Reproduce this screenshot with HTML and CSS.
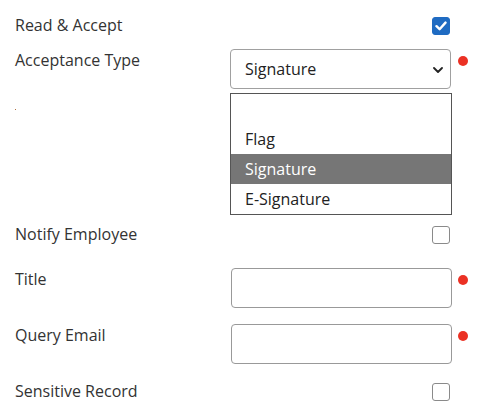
FILE: index.html
```html
<!DOCTYPE html>
<html lang="en">
<head>
  <meta charset="UTF-8">
  <title>Document Settings</title>
  <link rel="stylesheet" href="styles.css">
</head>
<body>
<form class="form">

  <div class="row row-first">
    <label class="label">Read &amp; Accept</label>
    <div class="control control-check">
      <span class="check is-checked">
        <svg width="12" height="10" viewBox="0 0 12 10"><path d="M1.5 5.2 L4.6 8.2 L10.5 1.6" fill="none" stroke="#fff" stroke-width="2.4" stroke-linecap="round" stroke-linejoin="round"/></svg>
      </span>
    </div>
  </div>

  <div class="row row-select">
    <div class="label-col">
      <label class="label">Acceptance Type</label>
      <span class="stray"></span>
    </div>
    <div class="control">
      <div class="select">
        <span>Signature</span>
        <svg class="chevron" width="10" height="6" viewBox="0 0 10 6"><path d="M1 1 L5 5 L9 1" fill="none" stroke="#222" stroke-width="1.8" stroke-linecap="round" stroke-linejoin="round"/></svg>
      </div>
      <ul class="listbox">
        <li class="option"></li>
        <li class="option">Flag</li>
        <li class="option selected">Signature</li>
        <li class="option">E-Signature</li>
      </ul>
    </div>
    <span class="required"></span>
  </div>

  <div class="row row-notify">
    <label class="label">Notify Employee</label>
    <div class="control control-check">
      <span class="check"></span>
    </div>
  </div>

  <div class="row">
    <label class="label">Title</label>
    <div class="control">
      <input class="text-input" type="text">
    </div>
    <span class="required"></span>
  </div>

  <div class="row">
    <label class="label">Query Email</label>
    <div class="control">
      <input class="text-input" type="text">
    </div>
    <span class="required"></span>
  </div>

  <div class="row">
    <label class="label">Sensitive Record</label>
    <div class="control control-check">
      <span class="check"></span>
    </div>
  </div>

</form>
</body>
</html>
```

FILE: styles.css
```css
/* base */
html, body {
  margin: 0;
  padding: 0;
  background: #fff;
  font-family: "Open Sans", "Liberation Sans", sans-serif;
  font-size: 16px;
  color: #333;
}

.form {
  padding: 11px 0 0 15px;
}

/* label + control rows */
.row {
  display: flex;
  align-items: flex-start;
  margin-bottom: 13px;
}
.row-first { margin-bottom: 9px; }
.row-select { margin-bottom: 5px; }
.row-notify { margin-bottom: 19px; }

.label-col {
  display: flex;
  flex-direction: column;
  width: 215px;
}
.label {
  display: block;
  width: 215px;
  padding-top: 2px;
  line-height: 24px;
}
.stray {
  width: 1px;
  height: 1px;
  margin-top: 37px;
  background: #b07040;
}

.control {
  width: 222px;
  padding-top: 3px;
}
.control-check {
  display: flex;
  justify-content: flex-end;
  padding-top: 6px;
}

/* checkboxes */
.check {
  display: flex;
  align-items: center;
  justify-content: center;
  box-sizing: border-box;
  width: 18px;
  height: 18px;
  margin-right: 2px;
  border: 1px solid #8a8a8a;
  border-radius: 3px;
  background: #fff;
}
.check.is-checked {
  background: #1f6bc2;
  border-color: #1f6bc2;
}

/* dropdown */
.select {
  display: flex;
  align-items: center;
  justify-content: space-between;
  box-sizing: border-box;
  height: 40px;
  width: 221px;
  padding: 0 7px 0 14px;
  border: 1px solid #a0a0a0;
  border-radius: 4px;
  color: #222;
}
.chevron {
  margin-top: 2px;
}

.listbox {
  list-style: none;
  margin: 4px 0 0 0;
  padding: 0;
  box-sizing: border-box;
  width: 222px;
  border: 1px solid #555;
}
.option {
  height: 30px;
  line-height: 30px;
  padding-left: 14px;
  color: #222;
}
.option.selected {
  background: #767676;
  color: #fff;
}

/* text inputs */
.text-input {
  display: block;
  box-sizing: border-box;
  width: 221px;
  height: 40px;
  margin: 0 0 0 1px;
  border: 1px solid #999;
  border-radius: 4px;
  font: inherit;
  outline: none;
}

/* required marker */
.required {
  width: 10px;
  height: 10px;
  margin: 10px 0 0 6px;
  border-radius: 50%;
  background: #eb3124;
}
```
